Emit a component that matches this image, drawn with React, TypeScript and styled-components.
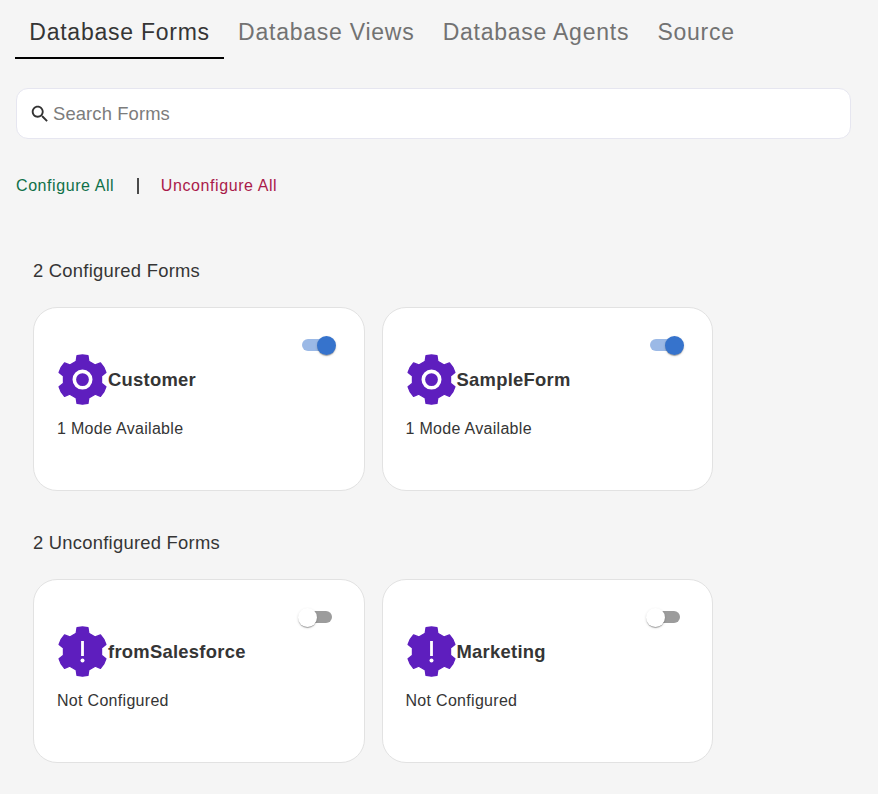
import React, { useState } from "react";
import styled, { createGlobalStyle } from "styled-components";

const GlobalStyle = createGlobalStyle`
  *, *::before, *::after { box-sizing: border-box; }
  body {
    margin: 0;
    background: #f5f5f5;
    color: #353535;
    font-family: "Liberation Sans", Helvetica, Arial, sans-serif;
  }
  button, input { font-family: inherit; }
`;

const Page = styled.main`
  min-height: 794px;
  padding: 0 27px 0 15px;
`;

const TabList = styled.nav`
  display: flex;
  height: 59px;
`;

const Tab = styled.button<{ $active: boolean }>`
  flex: none;
  height: 59px;
  padding: 8px 14px 0 14.3px;
  border: 0;
  border-bottom: 2px solid ${(p) => (p.$active ? "#000" : "transparent")};
  background: none;
  color: ${(p) => (p.$active ? "#353535" : "#727272")};
  font-size: 23px;
  line-height: 49px;
  letter-spacing: 0.75px;
  white-space: nowrap;
  cursor: pointer;
`;

const SearchBox = styled.label`
  display: flex;
  align-items: center;
  height: 51px;
  margin: 29px 0 0 1px;
  padding-left: 12px;
  border: 1px solid #e6e6f0;
  border-radius: 12px;
  background: #fff;
`;

const SearchInput = styled.input`
  flex: 1;
  padding: 0;
  margin-left: 2px;
  border: 0;
  outline: 0;
  background: none;
  color: #353535;
  font-size: 18.4px;
  letter-spacing: 0.12px;
  &::placeholder { color: #7c7c7c; opacity: 1; }
`;

const Actions = styled.div`
  display: flex;
  align-items: center;
  height: 24px;
  margin: 35px 0 0 1px;
`;

const ActionButton = styled.button<{ $tone: string }>`
  padding: 0;
  border: 0;
  background: none;
  color: ${(p) => p.$tone};
  font-size: 16px;
  letter-spacing: 0.58px;
  line-height: 24px;
  cursor: pointer;
`;

const Divider = styled.span`
  width: 2px;
  height: 16px;
  margin: 0 22.3px;
  background: #4a4a4a;
`;

const Section = styled.section<{ $top: number }>`
  margin: ${(p) => p.$top}px 0 0 18px;
`;

const SectionTitle = styled.h2`
  height: 24px;
  margin: 0 0 24px;
  font-size: 18.4px;
  font-weight: 400;
  line-height: 24px;
  letter-spacing: 0.25px;
`;

const CardGrid = styled.div`
  display: grid;
  grid-template-columns: 331.5px 331.5px;
  column-gap: 17px;
`;

const Card = styled.article`
  display: flex;
  flex-direction: column;
  height: 184px;
  padding: 18px 20px 0 23px;
  border: 1px solid #e2e2e2;
  border-radius: 24px;
  background: #fff;
`;

const SwitchRoot = styled.button`
  display: flex;
  align-items: center;
  align-self: flex-end;
  width: 54px;
  height: 38px;
  padding: 12px;
  border: 0;
  background: none;
  cursor: pointer;
`;

const SwitchTrack = styled.span<{ $on: boolean }>`
  display: flex;
  align-items: center;
  width: 30px;
  height: 12px;
  border-radius: 6px;
  background: ${(p) => (p.$on ? "#9bb9e6" : "#9c9c9c")};
`;

const SwitchThumb = styled.span<{ $on: boolean }>`
  flex: none;
  width: 19px;
  height: 19px;
  margin-left: ${(p) => (p.$on ? "15px" : "-4px")};
  border-radius: 50%;
  background: ${(p) => (p.$on ? "#3673cc" : "#fff")};
  box-shadow: 0 2px 1px -1px rgba(0, 0, 0, 0.2), 0 1px 1px rgba(0, 0, 0, 0.14),
    0 1px 3px rgba(0, 0, 0, 0.12);
`;

const CardHeading = styled.div`
  display: flex;
  align-items: center;
  height: 52px;
  margin-top: -10px;
`;

const CardTitle = styled.h3`
  margin: 0;
  font-size: 18.4px;
  font-weight: 700;
  letter-spacing: 0.27px;
`;

const CardStatus = styled.p`
  margin: 13px 0 0;
  font-size: 16px;
  line-height: 20px;
  letter-spacing: 0.3px;
`;

const polar = (radius: number, degrees: number) => {
  const a = (degrees * Math.PI) / 180;
  return `${(radius * Math.sin(a)).toFixed(2)},${(-radius * Math.cos(a)).toFixed(2)}`;
};

const gearPoints = [0, 60, 120, 180, 240, 300]
  .flatMap((t) => [
    polar(19.4, t - 19),
    polar(24.5, t - 12.9),
    polar(24.6, t),
    polar(24.5, t + 12.9),
    polar(19.4, t + 19),
  ])
  .join(" ");

function GearIcon({ configured }: { configured: boolean }) {
  return (
    <svg width="51" height="52" viewBox="-25.5 -25.6 51 52" aria-hidden="true">
      <polygon
        points={gearPoints}
        fill="#5e1ebe"
        stroke="#5e1ebe"
        strokeWidth="1.3"
        strokeLinejoin="round"
      />
      {configured ? (
        <circle r="8.2" fill="none" stroke="#fff" strokeWidth="3.6" />
      ) : (
        <>
          <rect x="-1.4" y="-10.6" width="2.8" height="15" fill="#fff" />
          <circle cx="0" cy="8.9" r="2" fill="#fff" />
        </>
      )}
    </svg>
  );
}

function SearchIcon() {
  return (
    <svg width="22" height="22" viewBox="0 0 24 24" fill="#323232" aria-hidden="true">
      <path d="M15.5 14h-.79l-.28-.27C15.41 12.59 16 11.11 16 9.5 16 5.91 13.09 3 9.5 3S3 5.91 3 9.5 5.91 16 9.5 16c1.61 0 3.09-.59 4.23-1.57l.27.28v.79l5 4.99L20.49 19l-4.99-5zm-6 0C7.01 14 5 11.99 5 9.5S7.01 5 9.5 5 14 7.01 14 9.5 11.99 14 9.5 14z" />
    </svg>
  );
}

function FormCard({ name, configured }: { name: string; configured: boolean }) {
  const [on, setOn] = useState(configured);
  return (
    <Card>
      <SwitchRoot role="switch" aria-checked={on} aria-label={name} onClick={() => setOn(!on)}>
        <SwitchTrack $on={on}>
          <SwitchThumb $on={on} />
        </SwitchTrack>
      </SwitchRoot>
      <CardHeading>
        <GearIcon configured={configured} />
        <CardTitle>{name}</CardTitle>
      </CardHeading>
      <CardStatus>{configured ? "1 Mode Available" : "Not Configured"}</CardStatus>
    </Card>
  );
}

const tabs = ["Database Forms", "Database Views", "Database Agents", "Source"];

export default function App() {
  const [active, setActive] = useState(tabs[0]);
  return (
    <Page>
      <GlobalStyle />
      <TabList>
        {tabs.map((tab) => (
          <Tab key={tab} $active={tab === active} onClick={() => setActive(tab)}>
            {tab}
          </Tab>
        ))}
      </TabList>
      <SearchBox>
        <SearchIcon />
        <SearchInput placeholder="Search Forms" />
      </SearchBox>
      <Actions>
        <ActionButton $tone="#0f7048">Configure All</ActionButton>
        <Divider />
        <ActionButton $tone="#aa1a4a">Unconfigure All</ActionButton>
      </Actions>
      <Section $top={61}>
        <SectionTitle>2 Configured Forms</SectionTitle>
        <CardGrid>
          <FormCard name="Customer" configured />
          <FormCard name="SampleForm" configured />
        </CardGrid>
      </Section>
      <Section $top={40}>
        <SectionTitle>2 Unconfigured Forms</SectionTitle>
        <CardGrid>
          <FormCard name="fromSalesforce" configured={false} />
          <FormCard name="Marketing" configured={false} />
        </CardGrid>
      </Section>
    </Page>
  );
}
